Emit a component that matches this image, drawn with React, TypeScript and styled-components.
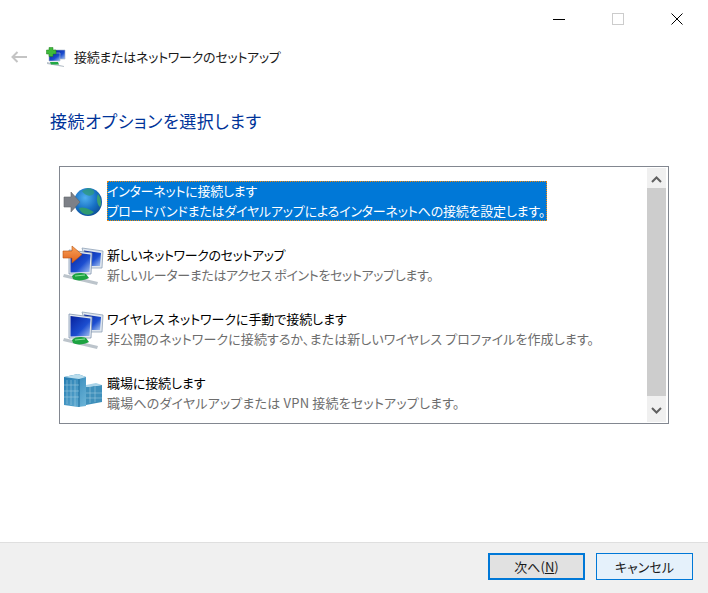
import React from 'react'
import styled, { createGlobalStyle } from 'styled-components'

const GlobalStyle = createGlobalStyle`
  html, body {
    margin: 0;
    padding: 0;
    background: #fff;
  }
  body {
    font-family: "Noto Sans CJK JP", "Noto Sans", sans-serif;
    font-feature-settings: "palt";
    color: #000;
  }
`

const Win = styled.div`
  width: 708px;
  height: 593px;
  display: flex;
  flex-direction: column;
  overflow: hidden;
`

const TitleBar = styled.div`
  height: 38px;
  display: flex;
  justify-content: flex-end;
  padding-right: 2px;
`

const WinBtn = styled.div`
  width: 59px;
  height: 38px;
  display: flex;
  align-items: center;
  justify-content: center;
`

const Header = styled.div`
  height: 38px;
  display: flex;
  align-items: center;
  padding-left: 11px;
`

const Back = styled.div`
  width: 16px;
  display: flex;
  margin-right: 19px;
`

const HeaderTitle = styled.div`
  font-size: 13px;
  line-height: 20px;
  color: #1a1a1a;
  margin-left: 8px;
  letter-spacing: -0.28px;
`

const Body = styled.div`
  flex: 1;
  padding: 32px 39px 0 50px;
`

const Heading = styled.h1`
  margin: 0 0 32px;
  font-size: 17px;
  line-height: 26px;
  font-weight: 400;
  color: #003399;
  letter-spacing: 0.6px;
`

const ListBox = styled.div`
  width: 610px;
  height: 258px;
  margin-left: 9px;
  box-sizing: border-box;
  border: 1px solid #828790;
  display: flex;
  justify-content: space-between;
  padding-right: 2px;
`

const Items = styled.div`
  padding: 14px 0 0 2px;
  display: flex;
  flex-direction: column;
  gap: 24px;
`

const Item = styled.div`
  display: flex;
  align-items: center;
  height: 40px;
`

const IconSlot = styled.div`
  width: 45px;
  height: 44px;
  flex: none;
`

const ItemText = styled.div<{ $selected?: boolean }>`
  font-size: 13px;
  line-height: 20px;
  height: 40px;
  box-sizing: border-box;
  white-space: nowrap;
  ${p => p.$selected && `
    background: #0078d7;
    color: #fff;
    outline: 1px dotted #f0860a;
    outline-offset: -1px;
    padding-right: 2px;
  `}
`

const ItemTitle = styled.div<{ $tracking: number }>`
  letter-spacing: ${p => p.$tracking}px;
`

const ItemDesc = styled.div<{ $selected?: boolean; $tracking: number }>`
  letter-spacing: ${p => p.$tracking}px;
  color: ${p => (p.$selected ? '#fff' : '#6d6d6d')};
`

const ScrollBar = styled.div`
  width: 19px;
  margin: 1px 0;
  display: flex;
  flex-direction: column;
  background: #f0f0f0;
`

const ScrollBtn = styled.div<{ $height: number }>`
  height: ${p => p.$height}px;
  box-sizing: border-box;
  padding-top: 3px;
  flex: none;
  display: flex;
  align-items: center;
  justify-content: center;
`

const ScrollThumb = styled.div`
  flex: 1;
  background: #cdcdcd;
`

const Footer = styled.div`
  height: 51px;
  box-sizing: border-box;
  border-top: 1px solid #dfdfdf;
  background: #f0f0f0;
  display: flex;
  justify-content: flex-end;
  align-items: flex-start;
  gap: 11px;
  padding: 10px 15px 0 0;
`

const Btn = styled.div<{ $primary?: boolean }>`
  width: 97px;
  height: 27px;
  box-sizing: border-box;
  display: flex;
  align-items: center;
  justify-content: center;
  font-size: 13px;
  color: #1a1a1a;
  background: ${p => (p.$primary ? '#e1e1e1' : '#e5f1fb')};
  border: ${p => (p.$primary ? '2px solid #0078d7' : '1px solid #0078d7')};
`

const Gradients = () => (
  <svg width="0" height="0" style={{ position: 'absolute' }}>
    <defs>
      <radialGradient id="globe" cx="0.4" cy="0.35" r="0.7">
        <stop offset="0" stopColor="#4fb0ef" />
        <stop offset="0.6" stopColor="#1770c4" />
        <stop offset="1" stopColor="#0d4f96" />
      </radialGradient>
      <linearGradient id="screen" x1="0" y1="0" x2="1" y2="1">
        <stop offset="0" stopColor="#06209c" />
        <stop offset="0.6" stopColor="#1c4ed0" />
        <stop offset="1" stopColor="#a9c6f2" />
      </linearGradient>
      <linearGradient id="orange" x1="0" y1="0" x2="0" y2="1">
        <stop offset="0" stopColor="#f9a35a" />
        <stop offset="1" stopColor="#e0601a" />
      </linearGradient>
      <linearGradient id="tower" x1="0" y1="0" x2="1" y2="1">
        <stop offset="0" stopColor="#1f78ae" />
        <stop offset="1" stopColor="#6db5d8" />
      </linearGradient>
    </defs>
  </svg>
)

const Monitors = () => (
  <>
    <path d="M20 5 L41 8 L40 25 L26 25 Z" fill="#dfe6ee" stroke="#8fa2b8" strokeWidth="0.8" />
    <path d="M22 7.5 L39 10 L38 23 L25 23 Z" fill="url(#screen)" />
    <path d="M7 7 L30 10 L29 31 L7 31 Z" fill="#e6ebf1" stroke="#8296b0" strokeWidth="0.8" />
    <path d="M8.5 9 L28.5 11.5 L27.5 29 L8.5 29.5 Z" fill="url(#screen)" />
    <path d="M14 31 L21 31 L22 34 L13 34 Z" fill="#8e9aa8" />
    <path d="M2 31 L36 39 L35 42 L1 34 Z" fill="#bcc4cb" />
    <path d="M10 33 C14 29 20 30 24 31 L27 35 C22 38 14 38 11 36 Z" fill="#1da341" />
    <path d="M13 33 L23 32" stroke="#8be29b" strokeWidth="1.2" />
  </>
)

const NetworkIcon = () => (
  <svg width="44" height="44" viewBox="0 0 44 44">
    <Monitors />
    <path d="M1 8 L10 8 L10 3 L20 11.5 L10 20 L10 15 L1 15 Z" fill="url(#orange)" stroke="#b9520f" strokeWidth="0.6" />
  </svg>
)

const WirelessIcon = () => (
  <svg width="44" height="44" viewBox="0 0 44 44">
    <Monitors />
  </svg>
)

const GlobeIcon = () => (
  <svg width="44" height="44" viewBox="0 0 44 44">
    <circle cx="26" cy="23" r="14" fill="url(#globe)" />
    <path d="M26 9 C33 10 34 14 30 16 C26 18 22 15 20 12 Z" fill="#2e9a7a" opacity="0.75" />
    <path d="M17 29 C22 27 29 31 32 33 C28 37 20 37 17 29 Z" fill="#2f9a70" />
    <path d="M36 15 C39 19 40 25 38 28 C35 26 34 19 36 15 Z" fill="#3a9f74" />
    <path d="M2 18 L9 18 L9 13 L18 23 L9 33 L9 28 L2 28 Z" fill="#7d8087" stroke="#63666c" strokeWidth="0.6" />
  </svg>
)

const OfficeIcon = () => (
  <svg width="44" height="44" viewBox="0 0 44 44">
    <path d="M24 16 L40 14 L40 31 L24 34 Z" fill="#3f90bb" />
    <path d="M24 14 L34 12 L40 14 L24 16 Z" fill="#a9d3e8" />
    <path d="M2 6 L16 3 L24 6 L24 35 L16 36 L2 34 Z" fill="url(#tower)" />
    <path d="M2 6 L16 3 L24 6 L17 8 Z" fill="#b9dded" />
    <path d="M17 8 L17 36" stroke="#17689b" strokeWidth="1" />
    <path d="M5 9 V33 M9 9 V34 M13 9 V35 M2 14 H17 M2 20 H17 M2 26 H17" stroke="#bfe0ef" strokeWidth="0.6" opacity="0.7" />
    <path d="M28 16 V32 M33 15 V31 M24 22 H40 M24 27 H40" stroke="#bfe0ef" strokeWidth="0.6" opacity="0.7" />
  </svg>
)

const SetupIcon = () => (
  <svg width="20" height="20" viewBox="0 0 20 20">
    <path d="M8 3 L19 3 L19 12 L9 12 Z" fill="url(#screen)" stroke="#a9b6c6" strokeWidth="0.6" />
    <path d="M3 6 L14 6 L14 14 L3 14 Z" fill="url(#screen)" stroke="#a9b6c6" strokeWidth="0.6" />
    <path d="M1 15 L18 19 L18 20 L1 17 Z" fill="#b9c2ca" />
    <path d="M4 15 H12 L13 17.5 H5 Z" fill="#21a845" />
    <path d="M3 0.5 H7 V3 H10 V7 H7 V9.5 H3 V7 H0.5 V3 H3 Z" fill="#3fbb3a" stroke="#1f7d1f" strokeWidth="0.5" />
  </svg>
)

const BackArrow = () => (
  <svg width="16" height="12" viewBox="0 0 16 12">
    <path d="M16 6 H1.5 M6.5 1 L1.5 6 L6.5 11" fill="none" stroke="#c4c4c4" strokeWidth="2" />
  </svg>
)

const Chevron = ({ up }: { up?: boolean }) => (
  <svg width="11" height="7" viewBox="0 0 11 7">
    <path d={up ? 'M1 6 L5.5 1.5 L10 6' : 'M1 1 L5.5 5.5 L10 1'} fill="none" stroke="#606060" strokeWidth="2" />
  </svg>
)

const options = [
  {
    icon: <GlobeIcon />,
    title: 'インターネットに接続します',
    titleTracking: -0.25,
    desc: 'ブロードバンドまたはダイヤルアップによるインターネットへの接続を設定します。',
    descTracking: -0.2,
    selected: true,
  },
  {
    icon: <NetworkIcon />,
    title: '新しいネットワークのセットアップ',
    titleTracking: -0.39,
    desc: '新しいルーターまたはアクセス ポイントをセットアップします。',
    descTracking: -0.37,
  },
  {
    icon: <WirelessIcon />,
    title: 'ワイヤレス ネットワークに手動で接続します',
    titleTracking: -0.06,
    desc: '非公開のネットワークに接続するか、または新しいワイヤレス プロファイルを作成します。',
    descTracking: 0.09,
  },
  {
    icon: <OfficeIcon />,
    title: '職場に接続します',
    titleTracking: -0.1,
    desc: '職場へのダイヤルアップまたは VPN 接続をセットアップします。',
    descTracking: 0.19,
  },
]

export default function App() {
  return (
    <Win>
      <GlobalStyle />
      <Gradients />
      <TitleBar>
        <WinBtn>
          <svg width="12" height="12" viewBox="0 0 12 12">
            <path d="M0 6.5 H12" stroke="#000" strokeWidth="1" />
          </svg>
        </WinBtn>
        <WinBtn>
          <svg width="12" height="12" viewBox="0 0 12 12">
            <rect x="0.5" y="0.5" width="11" height="11" fill="none" stroke="#cccccc" />
          </svg>
        </WinBtn>
        <WinBtn>
          <svg width="12" height="12" viewBox="0 0 12 12">
            <path d="M0.5 0.5 L11.5 11.5 M11.5 0.5 L0.5 11.5" stroke="#000" strokeWidth="1" />
          </svg>
        </WinBtn>
      </TitleBar>
      <Header>
        <Back>
          <BackArrow />
        </Back>
        <SetupIcon />
        <HeaderTitle>接続またはネットワークのセットアップ</HeaderTitle>
      </Header>
      <Body>
        <Heading>接続オプションを選択します</Heading>
        <ListBox>
          <Items>
            {options.map(o => (
              <Item key={o.title}>
                <IconSlot>{o.icon}</IconSlot>
                <ItemText $selected={o.selected}>
                  <ItemTitle $tracking={o.titleTracking}>{o.title}</ItemTitle>
                  <ItemDesc $selected={o.selected} $tracking={o.descTracking}>{o.desc}</ItemDesc>
                </ItemText>
              </Item>
            ))}
          </Items>
          <ScrollBar>
            <ScrollBtn $height={20}><Chevron up /></ScrollBtn>
            <ScrollThumb />
            <ScrollBtn $height={26}><Chevron /></ScrollBtn>
          </ScrollBar>
        </ListBox>
      </Body>
      <Footer>
        <Btn $primary>次へ(<u>N</u>)</Btn>
        <Btn>キャンセル</Btn>
      </Footer>
    </Win>
  )
}
